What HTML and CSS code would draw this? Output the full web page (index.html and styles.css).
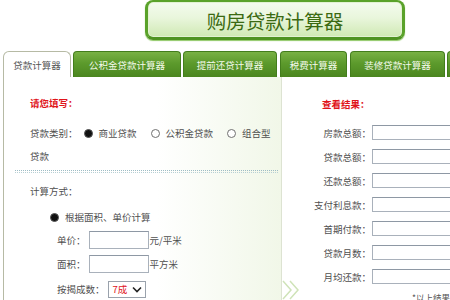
FILE: index.html
```html
<!DOCTYPE html>
<html lang="zh-CN">
<head>
<meta charset="utf-8">
<title>购房贷款计算器</title>
<link rel="stylesheet" href="styles.css">
</head>
<body>
<div class="page">
  <header class="header">
    <div class="title-box"><span class="title">购房贷款计算器</span></div>
  </header>
  <nav class="tabs">
    <div class="tab active w1">贷款计算器</div>
    <div class="tab w2">公积金贷款计算器</div>
    <div class="tab w3">提前还贷计算器</div>
    <div class="tab w4">税费计算器</div>
    <div class="tab w5">装修贷款计算器</div>
    <div class="tab w6">房</div>
  </nav>
  <main class="content">
    <section class="left">
      <div class="sec-title r1">请您填写：</div>
      <div class="row r2">
        <span>贷款类别：</span>
        <span class="radio on first"></span><span class="opt">商业贷款</span>
        <span class="radio"></span><span class="opt">公积金贷款</span>
        <span class="radio"></span><span class="opt">组合型</span>
      </div>
      <div class="row r3">贷款</div>
      <div class="divider"></div>
      <div class="row r4">计算方式：</div>
      <div class="row r5"><span class="radio on"></span><span class="opt">根据面积、单价计算</span></div>
      <div class="field r6"><span class="flabel">单价：</span><span class="input small"></span><span>元/平米</span></div>
      <div class="field r7"><span class="flabel">面积：</span><span class="input small"></span><span>平方米</span></div>
      <div class="field r8"><span class="flabel">按揭成数：</span><span class="select"><span class="sel-val">7成</span><svg class="chev" width="10" height="7" viewBox="0 0 10 7"><path d="M1 1.5 L5 5.5 L9 1.5" fill="none" stroke="#222" stroke-width="1.6"/></svg></span></div>
    </section>
    <section class="right">
      <div class="sec-title rt">查看结果：</div>
      <div class="res"><span class="rlabel">房款总额：</span><span class="input wide"></span></div>
      <div class="res"><span class="rlabel">贷款总额：</span><span class="input wide"></span></div>
      <div class="res"><span class="rlabel">还款总额：</span><span class="input wide"></span></div>
      <div class="res"><span class="rlabel">支付利息款：</span><span class="input wide"></span></div>
      <div class="res"><span class="rlabel">首期付款：</span><span class="input wide"></span></div>
      <div class="res"><span class="rlabel">贷款月数：</span><span class="input wide"></span></div>
      <div class="res"><span class="rlabel">月均还款：</span><span class="input wide"></span></div>
      <div class="note">*以上结果仅供参考</div>
    </section>
    <svg class="chevrons" width="24" height="22" viewBox="0 0 24 22"><path d="M2 2 L10 11 L2 20 M9 2 L17 11 L9 20" fill="none" stroke="#cfe3b8" stroke-width="1.5"/></svg>
  </main>
</div>
</body>
</html>
```
FILE: styles.css
```css
* { box-sizing: border-box; }
html, body { margin: 0; padding: 0; background: #fff; }
body {
  font-family: "Noto Sans CJK SC", "Noto Sans", sans-serif;
  font-size: 9.5px;
  color: #4f4f4f;
}
.page { width: 450px; height: 300px; overflow: hidden; position: relative; }

.header { height: 40px; display: flex; padding-left: 145px; }
.title-box {
  width: 260px; height: 40px;
  border: 3px solid #5aa22a;
  border-top-width: 2px;
  border-bottom-color: #4f9322;
  border-radius: 8px;
  background: linear-gradient(to bottom, #f4fbee 0%, #e9f6dc 45%, #cfe9b3 100%);
  box-shadow: inset 0 0 0 1px #e2f2d2, 0 1px 1px #8fc865;
  display: flex; align-items: center; justify-content: center;
}
.title { font-size: 19.5px; color: #3b6a12; line-height: 1; margin-top: 2px; }

.tabs { display: flex; gap: 2px; margin-top: 11px; padding-left: 3px; height: 26px; }
.tab {
  flex: none; height: 26px;
  display: flex; align-items: center; justify-content: center;
  color: #f4faec; font-size: 9.5px;
  background: linear-gradient(to bottom, #79b144 0%, #5c9a2c 45%, #4b861f 100%);
  border: 1px solid #437d1c; border-bottom: none;
  border-radius: 4px 4px 0 0;
}
.tab.active {
  background: #fff; color: #555;
  border: 1px solid #b6baa4; border-bottom: none;
  border-radius: 6px 6px 0 0;
}
.w1 { width: 68px; }
.w2 { width: 108px; }
.w3 { width: 94px; }
.w4 { width: 67px; margin-left: 1px; }
.w5 { width: 95px; margin-left: 1px; }
.w6 { width: 40px; }

.content { display: flex; height: 223px; position: relative; }
.left {
  flex: none; width: 279px; margin-left: 3px;
  border-left: 1px solid #b6baa4;
  border-right: 1px solid #dde3d2;
  background: linear-gradient(to right, #ffffff 55%, #f1f7e8 100%);
  padding-left: 26px;
  display: flex; flex-direction: column;
}
.sec-title { color: #e0141a; font-weight: bold; height: 16px; line-height: 16px; font-size: 9.5px; }
.r1 { margin-top: 18px; }
.row { height: 16px; line-height: 16px; display: flex; align-items: center; white-space: nowrap; }
.r2 { margin-top: 14px; }
.r3 { margin-top: 7px; }
.r4 { margin-top: 10px; }
.r5 { margin-top: 10px; padding-left: 20px; }
.divider {
  margin-top: 6px; margin-left: -15px; width: 263px; height: 3px;
  border-top: 1px dotted #9dbcc4; border-bottom: 1px dotted #b8d0d4;
}
.radio {
  flex: none; width: 9px; height: 9px; border-radius: 50%;
  border: 1px solid #707070; background: #fff; margin-right: 6px;
}
.radio.on { background: #111; border-color: #555; }
.radio.first { margin-left: 6px; }
.opt { margin-right: 14px; }
.r5 .opt { margin-left: 0; }

.field { display: flex; align-items: center; height: 18px; padding-left: 27px; white-space: nowrap; }
.r6 { margin-top: 6px; }
.r7 { margin-top: 6px; }
.r8 { margin-top: 7px; }
.flabel { margin-right: 1px; }
.input {
  display: block; flex: none; background: #fff;
  border: 1px solid #a9b1bb; border-top-color: #8e98a4;
}
.input.small { width: 60px; height: 18px; margin-left: 2px; margin-right: 1px; }
.select {
  display: flex; align-items: center; justify-content: space-between;
  width: 38px; height: 17px; margin-left: 2px;
  border: 1px solid #9aa2ac; background: #fff; padding: 0 3px 0 4px;
}
.sel-val { color: #e0141a; }

.right { flex: none; width: 170px; display: flex; flex-direction: column; }
.rt { margin-top: 19px; padding-left: 40px; }
.res { display: flex; align-items: center; height: 15px; margin-top: 9px; white-space: nowrap; }
.rt + .res { margin-top: 13px; }
.rlabel { width: 89px; text-align: right; flex: none; }
.input.wide { width: 90px; height: 15px; margin-left: 1px; }
.note { margin-top: 7px; padding-left: 130px; font-size: 8.5px; line-height: 12px; white-space: nowrap; color: #555; }

.chevrons { position: absolute; left: 281px; top: 202px; }
```
